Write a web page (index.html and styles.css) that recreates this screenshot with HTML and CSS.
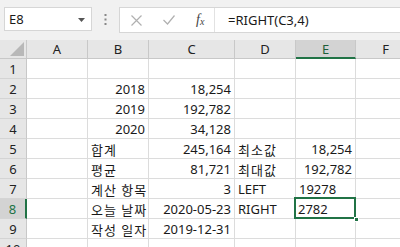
FILE: index.html
```html
<!DOCTYPE html>
<html lang="ko">
<head>
    <meta charset="UTF-8">
    <title>RIGHT 함수</title>
    <link rel="stylesheet" href="styles.css">
</head>
<body>
    <div class="toolbar">
        <div class="namebox">
            <span>E8</span>
            <svg class="caret" width="7" height="4" viewBox="0 0 7 4"><polygon points="0,0 7,0 3.5,4" fill="#555"/></svg>
        </div>
        <div class="grip">
            <svg width="3" height="11" viewBox="0 0 3 11"><rect x="0.5" y="0" width="2" height="2" fill="#888"/><rect x="0.5" y="4.5" width="2" height="2" fill="#888"/><rect x="0.5" y="9" width="2" height="2" fill="#888"/></svg>
        </div>
        <div class="formula">
            <div class="fbtns">
                <svg width="11" height="11" viewBox="0 0 11 11"><path d="M0.5 0.5 L10.5 10.5 M10.5 0.5 L0.5 10.5" stroke="#b0b0b0" stroke-width="1.2" fill="none"/></svg>
                <svg width="12" height="10" viewBox="0 0 12 10"><path d="M0.5 5 L4.5 9 L11.5 0.5" stroke="#b0b0b0" stroke-width="1.2" fill="none"/></svg>
                <span class="fx">f<sub>x</sub></span>
            </div>
            <div class="ftext">=RIGHT(C3,4)</div>
        </div>
    </div>

    <div class="sheet">
        <div class="hd corner">
            <svg width="14" height="14" viewBox="0 0 14 14"><polygon points="14,0 14,14 0,14" fill="#b8b8b8"/></svg>
        </div>
        <div class="hd">A</div>
        <div class="hd">B</div>
        <div class="hd">C</div>
        <div class="hd">D</div>
        <div class="hd on">E</div>
        <div class="hd">F</div>

        <div class="rn">1</div><div class="c"></div><div class="c"></div><div class="c"></div><div class="c"></div><div class="c"></div><div class="c"></div>
        <div class="rn">2</div><div class="c"></div><div class="c r">2018</div><div class="c r">18,254</div><div class="c"></div><div class="c"></div><div class="c"></div>
        <div class="rn">3</div><div class="c"></div><div class="c r">2019</div><div class="c r">192,782</div><div class="c"></div><div class="c"></div><div class="c"></div>
        <div class="rn">4</div><div class="c"></div><div class="c r">2020</div><div class="c r">34,128</div><div class="c"></div><div class="c"></div><div class="c"></div>
        <div class="rn">5</div><div class="c"></div><div class="c ko">합계</div><div class="c r">245,164</div><div class="c ko">최소값</div><div class="c r">18,254</div><div class="c"></div>
        <div class="rn">6</div><div class="c"></div><div class="c ko">평균</div><div class="c r">81,721</div><div class="c ko">최대값</div><div class="c r">192,782</div><div class="c"></div>
        <div class="rn">7</div><div class="c"></div><div class="c ko">계산 항목</div><div class="c r">3</div><div class="c">LEFT</div><div class="c">19278</div><div class="c"></div>
        <div class="rn on">8</div><div class="c"></div><div class="c ko">오늘 날짜</div><div class="c r">2020-05-23</div><div class="c">RIGHT</div><div class="c sel">2782</div><div class="c"></div>
        <div class="rn">9</div><div class="c"></div><div class="c ko">작성 일자</div><div class="c r">2019-12-31</div><div class="c"></div><div class="c"></div><div class="c"></div>
        <div class="rn">10</div><div class="c"></div><div class="c"></div><div class="c"></div><div class="c"></div><div class="c"></div><div class="c"></div>
    </div>
</body>
</html>
```

FILE: styles.css
```css
body {
    margin: 0;
    background-color: #ffffff;
    font-family: "Noto Sans", "Noto Sans CJK KR", sans-serif;
    font-size: 13px;
    color: #1a1a1a;
    overflow: hidden;
}
.toolbar {
    display: flex;
    align-items: flex-start;
    height: 40px;
    padding: 7px 0 0 4px;
    box-sizing: border-box;
    background-color: #f1f1f1;
}
.namebox {
    display: flex;
    align-items: center;
    justify-content: space-between;
    width: 88px;
    height: 24px;
    padding: 0 6px 0 4px;
    box-sizing: border-box;
    background-color: #ffffff;
    border: 1px solid #d6d6d6;
}
.caret {
    margin-top: 1px;
}
.grip {
    width: 27px;
    display: flex;
    justify-content: center;
    padding-top: 7px;
}
.formula {
    flex: 1;
    display: flex;
    height: 24px;
    background-color: #ffffff;
    border: 1px solid #d6d6d6;
    border-right: none;
}
.fbtns {
    display: flex;
    align-items: center;
    gap: 21px;
    width: 95px;
    padding-left: 11px;
    box-sizing: border-box;
    border-right: 1px solid #e2e2e2;
}
.fx {
    font-family: "Liberation Serif", serif;
    font-style: italic;
    font-size: 14px;
    color: #444;
}
.fx sub {
    font-size: 10px;
    vertical-align: -1px;
}
.ftext {
    display: flex;
    align-items: center;
    padding-left: 13px;
}
.sheet {
    display: grid;
    grid-template-columns: 27px 61px 61px 86px 61px 60px 60px;
    grid-template-rows: 19px repeat(10, 20px);
}
.hd {
    display: flex;
    align-items: center;
    justify-content: center;
    background-color: #e6e6e6;
    border-right: 1px solid #c8c8c8;
    border-bottom: 1px solid #c8c8c8;
    box-sizing: border-box;
    color: #222;
}
.hd.on {
    background-color: #d3d3d3;
    border-bottom: 2px solid #217346;
    color: #1e5e3a;
}
.corner {
    align-items: flex-end;
    justify-content: flex-end;
    padding: 0 2px 2px 0;
}
.rn {
    display: flex;
    align-items: center;
    justify-content: center;
    background-color: #e6e6e6;
    border-right: 1px solid #c8c8c8;
    border-bottom: 1px solid #d4d4d4;
    box-sizing: border-box;
    color: #222;
    padding-top: 1px;
}
.rn.on {
    background-color: #d3d3d3;
    border-right: 2px solid #217346;
    color: #217346;
}
.c {
    display: flex;
    align-items: center;
    padding: 1px 3px 0 3px;
    border-right: 1px solid #dcdcdc;
    border-bottom: 1px solid #dcdcdc;
    box-sizing: border-box;
    white-space: nowrap;
}
.c.r {
    justify-content: flex-end;
}
.c.ko {
    letter-spacing: 1px;
}
.sel {
    position: relative;
    padding-left: 2px;
}
.sel::after {
    content: "";
    position: absolute;
    left: -2px;
    top: -2px;
    right: -1px;
    bottom: -1px;
    border: 2px solid #217346;
}
.sel::before {
    content: "";
    position: absolute;
    right: -4px;
    bottom: -4px;
    width: 5px;
    height: 5px;
    background-color: #217346;
    border: 1px solid #ffffff;
    box-sizing: border-box;
    z-index: 1;
}
```
